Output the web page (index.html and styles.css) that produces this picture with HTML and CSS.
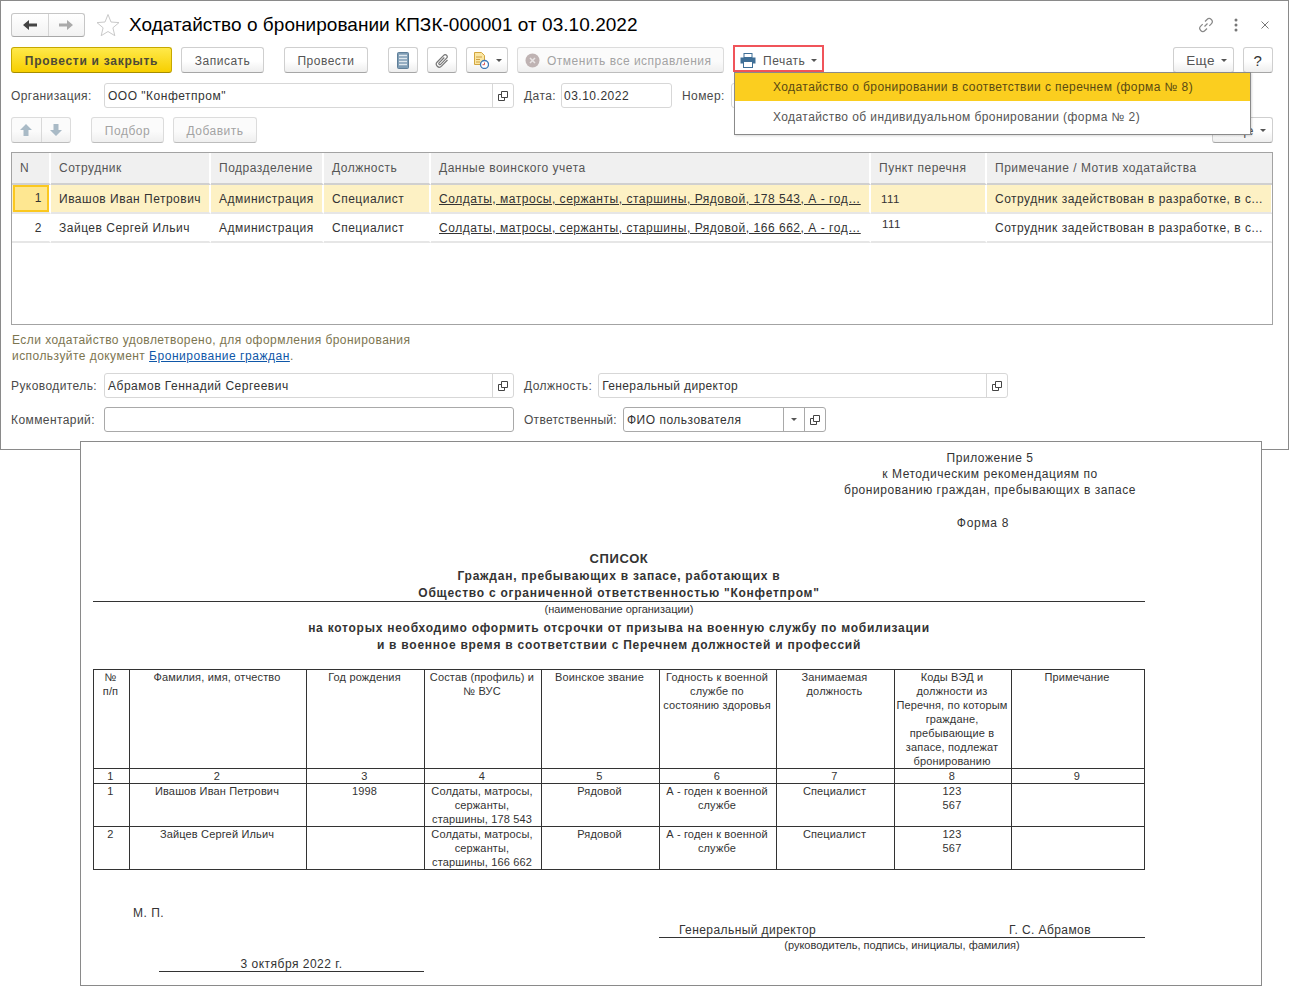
FILE: index.html
```html
<!DOCTYPE html>
<html lang="ru">
<head>
<meta charset="utf-8">
<title>Ходатайство о бронировании</title>
<link rel="stylesheet" href="styles.css">
</head>
<body>
<svg class="defs" width="0" height="0" aria-hidden="true">
  <symbol id="open" viewBox="0 0 12 12">
    <path d="M4.5 1.5h6v6h-6zM4.5 4.5h-3v6h6v-3" fill="none" stroke="#444" stroke-width="1"/>
  </symbol>
</svg>
<section class="window">
  <header class="titlebar">
    <div class="nav">
      <span class="nav-btn"><svg width="14" height="12" viewBox="0 0 14 12"><path d="M0 6l6-5v3.5h8v3H6V11z" fill="#444"/></svg></span>
      <span class="nav-btn"><svg width="14" height="12" viewBox="0 0 14 12"><path d="M14 6L8 1v3.5H0v3h8V11z" fill="#aaa"/></svg></span>
    </div>
    <svg class="star" width="24" height="24" viewBox="0 0 24 24"><path d="M12 1.5l3 7.5 8 .6-6.100 5.200 1.900 7.900L12 18.500l-6.800 4.200 1.900-7.900L1 9.600l8-.6z" fill="#fff" stroke="#c9c9c9"/></svg>
    <h1 class="title">Ходатайство о бронировании КПЗК-000001 от 03.10.2022</h1>
    <div class="win-tools">
      <svg class="wt-link" width="16" height="16" viewBox="0 0 16 16"><path d="M6.500 9.500l3-3M7 4.500l2-2a3 3 0 0 1 4.300 4.300l-2 2M9 11.500l-2 2a3 3 0 0 1-4.300-4.300l2-2" fill="none" stroke="#888" stroke-width="1.200"/></svg>
      <svg class="wt-dots" width="4" height="14" viewBox="0 0 4 14"><circle cx="2" cy="2" r="1.500" fill="#777"/><circle cx="2" cy="7" r="1.500" fill="#777"/><circle cx="2" cy="12" r="1.500" fill="#777"/></svg>
      <svg class="wt-close" width="8" height="8" viewBox="0 0 8 8"><path d="M.5.5l7 7M7.500.5l-7 7" stroke="#777" fill="none"/></svg>
    </div>
  </header>

  <div class="row cmd">
    <button class="btn primary w-post">Провести и закрыть</button>
    <button class="btn w-save">Записать</button>
    <button class="btn w-run">Провести</button>
    <button class="btn icon-btn m-list"><svg width="12" height="17" viewBox="0 0 12 17"><rect x=".5" y=".5" width="11" height="16" rx="1" fill="#7f9db5" stroke="#5f7f99"/><path d="M2 3.500h8M2 6.500h8M2 9.500h8M2 12.500h8" stroke="#dfe8ee" stroke-width="1.500"/></svg></button>
    <button class="btn icon-btn m-clip"><svg width="16" height="16" viewBox="0 0 16 16"><path d="M13.500 7l-6 6.200a3 3 0 0 1-4.300-4.200l6.500-6.700a2 2 0 0 1 2.900 2.800l-6 6.200a1 1 0 0 1-1.500-1.400l5.200-5.400" fill="none" stroke="#777" stroke-width="1.200"/></svg></button>
    <button class="btn icon-btn w-doc"><svg width="16" height="17" viewBox="0 0 16 17"><path d="M1.500.5h7l3 3v9h-10z" fill="#fbe7a4" stroke="#d3a63e"/><path d="M3 5h6M3 7.500h4M3 10h4" stroke="#cfa042"/><circle cx="11.500" cy="12.500" r="4" fill="#fff" stroke="#3d78b5" stroke-width="1.300"/><path d="M11.500 10.500v2.200h-2" stroke="#d9534f" fill="none"/></svg><i class="caret"></i></button>
    <button class="btn disabled w-undo"><svg width="15" height="15" viewBox="0 0 15 15"><circle cx="7.500" cy="7.500" r="7" fill="#bfb3b3"/><path d="M5 5l5 5M10 5l-5 5" stroke="#e9e5e5" stroke-width="1.500"/></svg>Отменить все исправления</button>
    <button class="print">
      <svg width="16" height="15" viewBox="0 0 16 15"><rect x="4" y=".5" width="8" height="4" fill="#fff" stroke="#3f6f96"/><path d="M.5 4.500h15v6h-15z" fill="#3f6f96"/><rect x="3.500" y="8.500" width="9" height="6" fill="#fff" stroke="#3f6f96"/></svg>
      Печать<i class="caret"></i>
    </button>
    <span class="spacer"></span>
    <button class="btn w-more"><span class="more-txt">Еще</span><i class="caret"></i></button>
    <button class="btn w-help">?</button>
  </div>

  <div class="row org">
    <label class="lbl w-lbl-org">Организация:</label>
    <div class="field w-org"><span class="val">ООО "Конфетпром"</span><span class="fbtn"><svg width="12" height="12"><use href="#open"/></svg></span></div>
    <label class="lbl m-date lbl-date">Дата:</label>
    <div class="field w-date"><span class="val val-date">03.10.2022</span></div>
    <label class="lbl m-num">Номер:</label>
    <div class="field w-num"></div>
  </div>

  <div class="row tools">
    <div class="updown">
      <span class="ud"><svg width="14" height="14" viewBox="0 0 14 14"><path d="M7 1l6 6H9.500v6h-5V7H1z" fill="#a9bac6"/></svg></span>
      <span class="ud"><svg width="14" height="14" viewBox="0 0 14 14"><path d="M7 13L1 7h3.500V1h5v6H13z" fill="#a9bac6"/></svg></span>
    </div>
    <button class="btn disabled w-pick">Подбор</button>
    <button class="btn disabled w-add">Добавить</button>
    <span class="spacer"></span>
    <button class="btn w-more2"><span class="more-txt">Еще</span><i class="caret"></i></button>
  </div>

  <div class="grid-wrap">
    <table class="grid">
      <colgroup>
        <col class="c1"><col class="c2"><col class="c3"><col class="c4"><col class="c5"><col class="c6"><col class="c7">
      </colgroup>
      <thead>
        <tr><th>N</th><th>Сотрудник</th><th>Подразделение</th><th>Должность</th><th>Данные воинского учета</th><th>Пункт перечня</th><th>Примечание / Мотив ходатайства</th></tr>
      </thead>
      <tbody>
        <tr class="current">
          <td class="num"><span class="cell-active">1</span></td><td>Ивашов Иван Петрович</td><td>Администрация</td><td>Специалист</td>
          <td><a class="data-link">Солдаты, матросы, сержанты, старшины, Рядовой, 178 543, А - год…</a></td>
          <td class="item">111</td><td>Сотрудник задействован в разработке, в с...</td>
        </tr>
        <tr>
          <td class="num">2</td><td>Зайцев Сергей Ильич</td><td>Администрация</td><td>Специалист</td>
          <td><a class="data-link">Солдаты, матросы, сержанты, старшины, Рядовой, 166 662, А - год…</a></td>
          <td class="item raised">111</td><td>Сотрудник задействован в разработке, в с...</td>
        </tr>
      </tbody>
    </table>
  </div>

  <p class="hint">Если ходатайство удовлетворено, для оформления бронирования<br>используйте документ <a class="hint-link">Бронирование граждан</a>.</p>

  <div class="row mgr">
    <label class="lbl w-lbl-org">Руководитель:</label>
    <div class="field w-org"><span class="val">Абрамов Геннадий Сергеевич</span><span class="fbtn"><svg width="12" height="12"><use href="#open"/></svg></span></div>
    <label class="lbl m-date">Должность:</label>
    <div class="field w-pos"><span class="val val-tight">Генеральный директор</span><span class="fbtn"><svg width="12" height="12"><use href="#open"/></svg></span></div>
  </div>

  <div class="row comment">
    <label class="lbl w-lbl-org">Комментарий:</label>
    <div class="field strong w-org"></div>
    <label class="lbl m-date lbl-tight">Ответственный:</label>
    <div class="field strong w-resp"><span class="val">ФИО пользователя</span><span class="fbtn strong"><i class="caret solo"></i></span><span class="fbtn strong"><svg width="12" height="12"><use href="#open"/></svg></span></div>
  </div>

  <div class="menu">
    <div class="menu-item on">Ходатайство о бронировании в соответствии с перечнем (форма № 8)</div>
    <div class="menu-item">Ходатайство об индивидуальном бронировании (форма № 2)</div>
  </div>
</section>

<section class="sheet">
  <div class="annex">Приложение 5<br>к Методическим рекомендациям по<br>бронированию граждан, пребывающих в запасе</div>
  <div class="form-no">Форма 8</div>
  <div class="h-list">СПИСОК</div>
  <div class="h-line">Граждан, пребывающих в запасе, работающих в</div>
  <div class="h-line ruled">Общество с ограниченной ответственностью "Конфетпром"</div>
  <div class="caption">(наименование организации)</div>
  <div class="h-line gap-a">на которых необходимо оформить отсрочки от призыва на военную службу по мобилизации</div>
  <div class="h-line">и в военное время в соответствии с Перечнем должностей и профессий</div>

  <table class="plist">
    <colgroup>
      <col class="p1"><col class="p2"><col class="p3"><col class="p4"><col class="p5"><col class="p6"><col class="p7"><col class="p8"><col class="p9">
    </colgroup>
    <tr class="phead">
      <td>№<br>п/п</td><td>Фамилия, имя, отчество</td><td>Год рождения</td><td>Состав (профиль) и<br>№ ВУС</td><td>Воинское звание</td><td>Годность к военной<br>службе по<br>состоянию здоровья</td><td>Занимаемая<br>должность</td><td>Коды ВЭД и<br>должности из<br>Перечня, по которым<br>граждане,<br>пребывающие в<br>запасе, подлежат<br>бронированию</td><td>Примечание</td>
    </tr>
    <tr class="pnums"><td>1</td><td>2</td><td>3</td><td>4</td><td>5</td><td>6</td><td>7</td><td>8</td><td>9</td></tr>
    <tr class="prow">
      <td>1</td><td>Ивашов Иван Петрович</td><td>1998</td><td>Солдаты, матросы,<br>сержанты,<br>старшины, 178 543</td><td>Рядовой</td><td>А - годен к военной<br>службе</td><td>Специалист</td><td>123<br>567</td><td></td>
    </tr>
    <tr class="prow">
      <td>2</td><td>Зайцев Сергей Ильич</td><td></td><td>Солдаты, матросы,<br>сержанты,<br>старшины, 166 662</td><td>Рядовой</td><td>А - годен к военной<br>службе</td><td>Специалист</td><td>123<br>567</td><td></td>
    </tr>
  </table>

  <div class="stamp">М. П.</div>
  <div class="sign"><span>Генеральный директор</span><span>Г. С. Абрамов</span></div>
  <div class="caption sign-cap">(руководитель, подпись, инициалы, фамилия)</div>
  <div class="date-line">3 октября 2022 г.</div>
</section>
</body>
</html>
```
FILE: styles.css
```css
* { box-sizing: border-box; }
html, body { margin: 0; padding: 0; }
body {
  position: relative;
  width: 1289px;
  height: 987px;
  overflow: hidden;
  background: #fff;
  font-family: "Liberation Sans", Arial, sans-serif;
  font-size: 12px;
  color: #333;
}
.defs { position: absolute; }
button { font: inherit; margin: 0; }

/* windows */
.window {
  position: absolute;
  left: 0; top: 0;
  width: 1289px; height: 450px;
  background: #fff;
  border: 1px solid #8a8a8a;
  padding: 0 15px 0 10px;
  letter-spacing: .5px;
}
.sheet {
  position: absolute;
  left: 80px; top: 441px;
  width: 1182px; height: 545px;
  background: #fff;
  border: 1px solid #8a8a8a;
  padding: 7px 116px 0 12px;
  color: #333;
}

/* title bar */
.titlebar { display: flex; align-items: center; height: 24px; margin-top: 12px; }
.nav { display: flex; width: 74px; height: 24px; border: 1px solid #c6c6c6; border-bottom-color: #a8a8a8; border-radius: 3px; background: linear-gradient(#fff, #f2f2f2); }
.nav-btn { flex: 1; display: flex; align-items: center; justify-content: center; }
.nav-btn + .nav-btn { border-left: 1px solid #d4d4d4; }
.star { margin-left: 11px; }
.title { margin: 0 0 0 9px; font-size: 19px; font-weight: 400; color: #000; letter-spacing: .04px; white-space: nowrap; }
.win-tools { margin-left: auto; margin-right: 4px; display: flex; align-items: center; }
.wt-dots { margin-left: 20px; }
.wt-close { margin-left: 23px; }

/* rows */
.row { display: flex; align-items: center; }
.spacer { flex: 1; }
.cmd { height: 26px; margin-top: 10px; }
.org { height: 25px; margin-top: 10px; }
.tools { height: 26px; margin-top: 9px; }
.mgr { height: 25px; margin-top: 9px; }
.comment { height: 25px; margin-top: 9px; }

/* buttons */
.btn {
  height: 26px;
  display: inline-flex; align-items: center; justify-content: center;
  padding: 1px 0 0;
  border: 1px solid #cfcfcf;
  border-bottom-color: #a6a6a6;
  border-radius: 3px;
  background: linear-gradient(#fff 55%, #eee);
  color: #555;
  letter-spacing: .5px;
  white-space: nowrap;
}
.primary {
  background: linear-gradient(#ffe94a, #f7cf00);
  border-color: #c6a800;
  border-bottom-color: #a68d00;
  color: #4d4a36;
  font-weight: 700;
  letter-spacing: .72px;
}
.disabled { color: #a3a3a3; border-color: #dcdcdc; border-bottom-color: #bdbdbd; background: linear-gradient(#fbfbfb 55%, #efefef); }
.w-post { width: 161px; }
.w-save { width: 83px; margin-left: 9px; }
.w-run { width: 84px; margin-left: 20px; }
.icon-btn { width: 30px; }
.m-list { margin-left: 20px; }
.m-clip { margin-left: 9px; }
.w-doc { width: 42px; margin-left: 9px; gap: 1px; justify-content: flex-start; padding-left: 6px; }
.w-undo { width: 207px; margin-left: 9px; gap: 7px; justify-content: flex-start; padding-left: 7px; }
.print {
  display: inline-flex; align-items: center;
  width: 87px; height: 23px; margin: -3px 0 0 11px; padding: 4px 0 0 5px;
  border: 0; background: #fff; color: #555; letter-spacing: .5px;
  outline: 2px solid #f0545a;
}
.print svg { margin-right: 7px; }
.w-more { width: 61px; padding-left: 6px; }
.more-txt { font-size: 13.500px; letter-spacing: .4px; }
.w-help { width: 30px; margin-left: 9px; font-size: 15px; font-weight: 400; color: #333; }
.w-more2 { width: 61px; padding-left: 6px; }
.caret { display: inline-block; width: 0; height: 0; margin-left: 6px; border: 3px solid transparent; border-top: 3px solid #555; border-bottom: 0; }
.caret.solo { margin: 0; }
.updown { display: flex; width: 60px; height: 26px; border: 1px solid #dcdcdc; border-bottom-color: #bdbdbd; border-radius: 3px; background: linear-gradient(#fbfbfb 55%, #efefef); }
.ud { flex: 1; display: flex; align-items: center; justify-content: center; }
.ud + .ud { border-left: 1px solid #d9d9d9; }
.w-pick { width: 73px; margin-left: 20px; }
.w-add { width: 84px; margin-left: 9px; }

/* fields */
.lbl { white-space: nowrap; color: #4a4a4a; letter-spacing: .42px; }
.lbl-tight { letter-spacing: .28px; }
.w-lbl-org { width: 93px; }
.m-date { margin-left: 10px; margin-right: 6px; }
.lbl-date { margin-right: 5px; }
.m-num { margin-left: 10px; margin-right: 6px; }
.field {
  display: flex; align-items: stretch;
  height: 25px;
  border: 1px solid #d7d7d7;
  border-radius: 3px;
  background: #fff;
  color: #333;
}
.field.strong { border-color: #a9a9a9; }
.val { flex: 1; padding-left: 3px; line-height: 24px; white-space: nowrap; overflow: hidden; }
.val-date { padding-left: 2px; }
.val-tight { letter-spacing: .35px; }
.fbtn { width: 21px; display: flex; align-items: center; justify-content: center; border-left: 1px solid #d7d7d7; }
.fbtn.strong { border-left-color: #a9a9a9; }
.w-org { width: 410px; }
.w-date { width: 111px; }
.w-num { width: 200px; }
.w-pos { width: 410px; }
.w-resp { width: 203px; }

/* grid */
.grid-wrap { height: 173px; margin-top: 9px; border: 1px solid #a3a3a3; overflow: hidden; }
.grid { width: 100%; border-collapse: separate; border-spacing: 0; table-layout: fixed; }
.c1 { width: 39px; } .c2 { width: 160px; } .c3 { width: 113px; } .c4 { width: 107px; }
.c5 { width: 440px; } .c6 { width: 116px; } .c7 { width: 286px; }
.grid th {
  height: 32px; padding: 0 0 0 8px;
  background: #f0f0f0;
  font-weight: 400; color: #555; text-align: left;
  border-right: 2px solid #fff;
  border-bottom: 2px solid #d0d0d0;
  white-space: nowrap;
}
.grid th:last-child { border-right: 0; }
.grid td {
  height: 29px; padding: 0 0 0 8px;
  color: #333;
  border-right: 2px solid transparent;
  border-bottom: 2px solid #e6e6e6;
  white-space: nowrap; overflow: hidden;
}
.grid .current td { background: #fdf1c4; border-right-color: #fff; }
.grid td.num { padding: 0 7px 0 0; text-align: right; }
.grid .current td.num { padding: 0 0 0 1px; }
.cell-active { display: block; height: 27px; line-height: 23px; padding-right: 5px; background: #fee791; border: 2px solid #fbc81f; text-align: right; }
.data-link { text-decoration: underline; color: #333; letter-spacing: .53px; }
.item { font-size: 11.500px; }
.grid td.item { padding-left: 10px; }
.grid td.raised { padding-bottom: 8px; padding-left: 11px; }

/* hint */
.hint { margin: 7px 0 0 1px; line-height: 16px; color: #7c7550; letter-spacing: .45px; }
.hint-link { color: #0f57a8; text-decoration: underline; letter-spacing: .53px; }

/* dropdown */
.menu {
  position: absolute; left: 733px; top: 71px;
  width: 517px; height: 63px;
  background: #fff;
  border: 1px solid #8a8a8a;
  box-shadow: 1px 1px 2px rgba(0,0,0,.15);
  letter-spacing: .42px;
}
.menu-item { height: 30px; padding-left: 38px; line-height: 31px; color: #555; white-space: nowrap; }
.menu-item.on { height: 28px; line-height: 29px; background: #fbce1f; color: #5a4a12; margin-bottom: 1px; }

/* printed form */
.annex { margin-left: 741px; width: 312px; padding-top: 1px; text-align: center; line-height: 16px; letter-spacing: .55px; white-space: nowrap; }
.form-no { margin: 17px 0 0 751px; width: 278px; text-align: center; line-height: 16px; letter-spacing: .7px; }
.h-list { margin-top: 20px; text-align: center; font-size: 13px; line-height: 16px; font-weight: 700; letter-spacing: .6px; }
.h-line { text-align: center; font-weight: 700; line-height: 17px; letter-spacing: .75px; }
.h-list + .h-line { margin-top: 1px; }
.ruled { border-bottom: 1px solid #333; height: 17px; }
.caption { text-align: center; font-size: 11px; line-height: 14px; }
.gap-a { margin-top: 4px; }
.plist { width: 1051px; margin-top: 15px; border-collapse: collapse; table-layout: fixed; font-size: 11px; line-height: 14px; letter-spacing: .15px; }
.plist td { border: 1px solid #333; padding: 0 2px 0 0; text-align: center; vertical-align: top; }
.p1 { width: 36px; } .p2 { width: 177px; } .p3 { width: 118px; } .p4 { width: 117px; } .p5 { width: 118px; }
.p6 { width: 117px; } .p7 { width: 118px; } .p8 { width: 117px; } .p9 { width: 133px; }
.phead { height: 99px; }
.pnums { height: 14px; }
.prow { height: 43px; }
.stamp { margin: 35px 0 0 40px; line-height: 16px; letter-spacing: .5px; }
.sign { display: flex; justify-content: space-between; margin: 0 0 0 566px; padding: 0 54px 0 20px; height: 17px; line-height: 18px; letter-spacing: .42px; border-bottom: 1px solid #333; }
.sign-cap { margin-left: 566px; }
.date-line { margin: 3px 0 0 66px; width: 265px; height: 17px; line-height: 18px; text-align: center; letter-spacing: .5px; border-bottom: 1px solid #333; }
```
